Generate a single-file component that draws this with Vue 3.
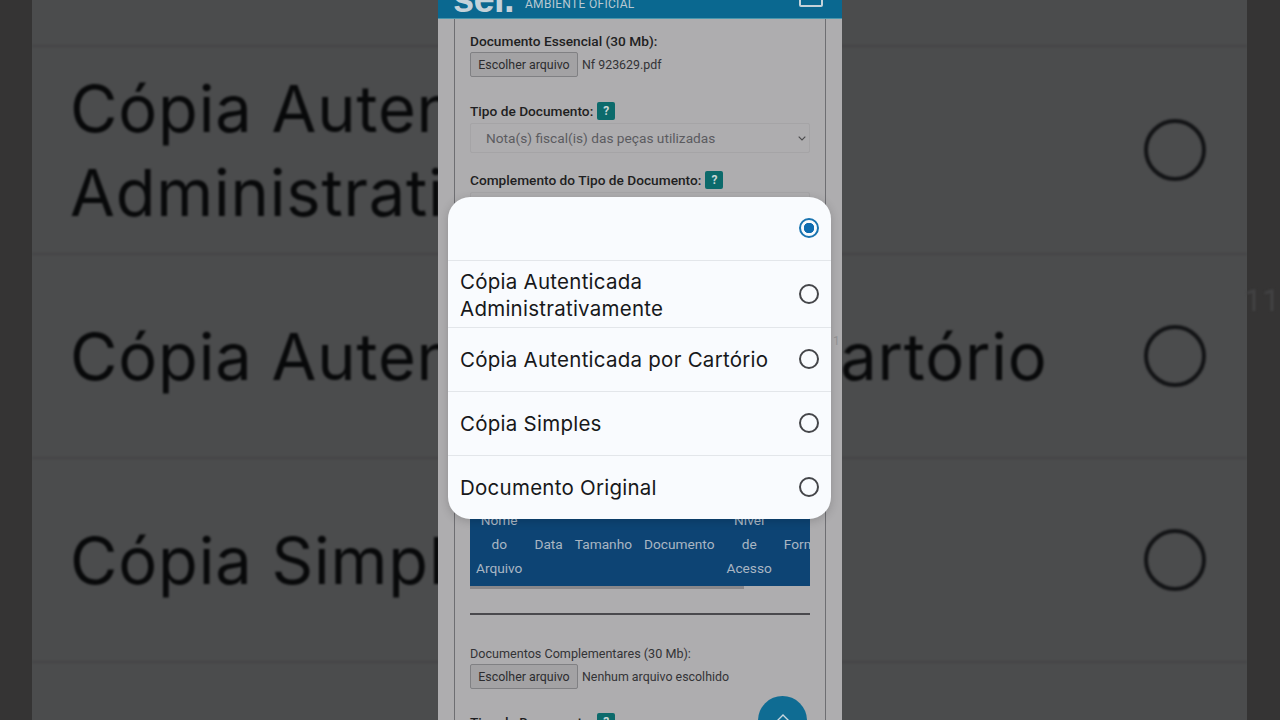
<script setup>
const bgRows = [
  { id: 1, lines: ['Cópia Autenticada', 'Administrativamente'] },
  { id: 2, lines: ['Cópia Autenticada por Cartório'] },
  { id: 3, lines: ['Cópia Simples'] },
]

const options = [
  { label: '', checked: true },
  { label: 'Cópia Autenticada Administrativamente', checked: false },
  { label: 'Cópia Autenticada por Cartório', checked: false },
  { label: 'Cópia Simples', checked: false },
  { label: 'Documento Original', checked: false },
]

const columns = [
  ['Nome', 'do', 'Arquivo'],
  ['Data'],
  ['Tamanho'],
  ['Documento'],
  ['Nível', 'de', 'Acesso'],
  ['Formato'],
]
</script>

<template>
  <div class="stage">
    <!-- blurred copy of the video behind the phone -->
    <div class="backdrop">
      <div class="bg-list">
        <div class="bg-row" v-for="row in bgRows" :key="row.id">
          <div class="bg-text">
            <div v-for="line in row.lines" :key="line">{{ line }}</div>
          </div>
          <span class="bg-radio"></span>
        </div>
        <div class="bg-row"></div>
      </div>
    </div>
    <span class="ghost">11</span>

    <div class="phone">
      <header class="topbar">
        <span class="logo">sei.</span>
        <span class="env">AMBIENTE OFICIAL</span>
        <span class="menu-box"></span>
      </header>

      <div class="sheet">
        <label class="strong first-label">Documento Essencial (30 Mb):</label>
        <div class="file-row">
          <button class="file-btn">Escolher arquivo</button>
          <span>Nf 923629.pdf</span>
        </div>

        <label class="strong type-label">Tipo de Documento: <span class="help">?</span></label>
        <div class="select">
          <span>Nota(s) fiscal(is) das peças utilizadas</span>
          <svg width="8" height="5" viewBox="0 0 8 5">
            <path d="M.7.7L4 4l3.3-3.3" fill="none" stroke="#4a4a4c" stroke-width="1.1" />
          </svg>
        </div>

        <label class="strong comp-label">Complemento do Tipo de Documento: <span class="help">?</span></label>
        <div class="select comp-select"></div>

        <div class="table-wrap">
          <div class="table-head">
            <div class="col" v-for="col in columns" :key="col[0]">
              <div v-for="word in col" :key="word">{{ word }}</div>
            </div>
          </div>
          <div class="scrollbar"></div>
        </div>

        <hr class="divider" />

        <label class="plain">Documentos Complementares (30 Mb):</label>
        <div class="file-row">
          <button class="file-btn">Escolher arquivo</button>
          <span>Nenhum arquivo escolhido</span>
        </div>

        <label class="strong last-label">Tipo de Documento: <span class="help">?</span></label>
      </div>

      <span class="page-mark">1</span>

      <button class="fab">
        <svg width="16" height="9" viewBox="0 0 16 9">
          <path d="M2 8l6-6 6 6" fill="none" stroke="#c9d6de" stroke-width="1.4" />
        </svg>
      </button>

      <div class="picker">
        <div class="option" v-for="opt in options" :key="opt.label">
          <span class="option-label">{{ opt.label }}</span>
          <span class="radio" :class="{ on: opt.checked }"></span>
        </div>
      </div>
    </div>
  </div>
</template>

<style>
html, body { margin: 0; background: #353434; }
</style>

<style scoped>
.stage {
  width: 1280px;
  height: 720px;
  position: relative;
  overflow: hidden;
  background: #353434;
  display: flex;
  justify-content: center;
  font-family: Roboto, "Liberation Sans", sans-serif;
}

.backdrop {
  position: absolute;
  inset: 0 33px 0 32px;
  background: #4b4c4d;
  overflow: hidden;
}

.ghost {
  position: absolute;
  left: 1244px;
  top: 282px;
  font-size: 32px;
  line-height: 36px;
  color: #434344;
  filter: blur(1px);
}

.bg-list {
  padding-top: 45px;
  filter: blur(.8px);
}

.bg-row {
  height: 202px;
  border-top: 2px solid #444546;
  display: flex;
  align-items: center;
  justify-content: space-between;
  padding: 0 41px 0 38px;
  font-family: Inter, "Liberation Sans", sans-serif;
  font-size: 65px;
  line-height: 84px;
  letter-spacing: .8px;
  color: #08090a;
}

.bg-row:first-child { height: 206px; }

.bg-text {
  white-space: nowrap;
  padding-top: 2px;
}

.bg-radio {
  width: 54px;
  height: 54px;
  border: 4px solid #131416;
  border-radius: 50%;
  flex: none;
}

.phone {
  position: relative;
  width: 404px;
  height: 720px;
  background: #aeadaf;
  overflow: hidden;
  flex: none;
  color: #1f1f22;
  font-size: 13.7px;
}

.topbar {
  height: 18px;
  background: #0a6890;
  border-bottom: 1px solid #4a97ad;
  display: flex;
  align-items: flex-end;
  color: #b9c9d2;
  overflow: hidden;
}

.logo {
  font-family: "Liberation Sans", sans-serif;
  font-weight: 700;
  font-size: 38px;
  line-height: 30px;
  margin-left: 15px;
  margin-bottom: 4px;
  letter-spacing: -.6px;
  color: #c4d2d9;
}

.env {
  margin-left: 11px;
  margin-bottom: 7px;
  font-size: 12px;
  line-height: 14px;
  letter-spacing: .3px;
}

.menu-box {
  position: relative;
  margin-left: auto;
  margin-right: 19px;
  margin-bottom: 11px;
  width: 20px;
  height: 10px;
  border: 2px solid #c4d2d9;
  border-radius: 2px;
}

.menu-box::after {
  content: "";
  position: absolute;
  left: 9px;
  top: 0;
  width: 2px;
  height: 2px;
  background: #c4d2d9;
}

.sheet {
  margin: 0 16px;
  height: 720px;
  padding: 14px 15px 0;
  border-left: 1px solid #6e6e72;
  border-right: 1px solid #6e6e72;
  display: flex;
  flex-direction: column;
  align-items: flex-start;
}

.strong { font-weight: 500; line-height: 16px; display: flex; align-items: center; gap: 4px; }
.plain { line-height: 16px; font-size: 12.6px; color: #333336; }

.first-label { margin-bottom: 1px; }

.file-row {
  display: flex;
  align-items: center;
  gap: 4px;
  margin-top: 2px;
  font-size: 12.4px;
  color: #333336;
}

.file-btn {
  width: 108px;
  height: 25px;
  padding: 0;
  font: inherit;
  color: #2c2c2f;
  background: #a3a2a4;
  border: 1px solid #808083;
  border-radius: 2px;
}

.type-label { margin-top: 25px; }
.comp-label { margin-top: 18px; }

.help {
  width: 18px;
  height: 18px;
  border-radius: 2px;
  background: #0c6a6b;
  color: #c8d6d6;
  font-size: 12px;
  font-weight: 700;
  display: inline-flex;
  align-items: center;
  justify-content: center;
}

.select {
  align-self: stretch;
  height: 30px;
  margin-top: 3px;
  padding: 0 3px 0 15px;
  box-sizing: border-box;
  border: 1px solid #a5a4a6;
  border-radius: 2px;
  display: flex;
  align-items: center;
  justify-content: space-between;
  color: #5b5b5f;
}

.comp-select { height: 40px; }

.table-wrap {
  align-self: stretch;
  margin-top: 269px;
  overflow: hidden;
}

.table-head {
  height: 85px;
  background: #0d4474;
  color: #a9b6c3;
  display: flex;
  align-items: center;
  text-align: center;
  line-height: 24px;
  white-space: nowrap;
  overflow: hidden;
  padding-left: 6px;
}

.col { margin-right: 12px; flex: none; }

.scrollbar {
  width: 274px;
  height: 3px;
  background: #88878a;
}

.divider {
  align-self: stretch;
  height: 2px;
  margin: 24px 0 0;
  border: 0;
  background: #4a494d;
}

.divider + .plain { margin-top: 31px; }

.last-label { margin-top: 24px; }

.page-mark {
  position: absolute;
  left: 395px;
  top: 334px;
  font-size: 12px;
  line-height: 14px;
  color: #939294;
}

.fab {
  position: absolute;
  left: 320px;
  top: 696px;
  width: 49px;
  height: 49px;
  padding: 17px 0 0;
  border: 0;
  border-radius: 50%;
  background: #0f6c93;
  display: flex;
  align-items: flex-start;
  justify-content: center;
}

.picker {
  position: absolute;
  left: 10px;
  top: 197px;
  width: 383px;
  height: 322px;
  background: #f9fbfe;
  border-radius: 22px;
  overflow: hidden;
  box-shadow: 0 2px 10px rgba(0, 0, 0, .18);
  font-family: Inter, "Liberation Sans", sans-serif;
  font-size: 20.5px;
  line-height: 27px;
  letter-spacing: .25px;
  color: #17181a;
}

.option {
  display: flex;
  align-items: center;
  justify-content: space-between;
  padding: 0 12px;
  height: 64px;
  border-top: 1px solid #e3e6ea;
  box-sizing: border-box;
}

.option:first-child { border-top: 0; height: 63px; }
.option:nth-child(2) { height: 67px; padding-top: 1px; }

.option-label { max-width: 330px; }

.radio {
  width: 20px;
  height: 20px;
  margin-bottom: 2px;
  box-sizing: border-box;
  border: 2px solid #45464a;
  border-radius: 50%;
  flex: none;
}

.radio.on {
  border-color: #1a74b0;
  background: radial-gradient(circle, #0e6cb0 0 5px, transparent 5.5px);
}
</style>
